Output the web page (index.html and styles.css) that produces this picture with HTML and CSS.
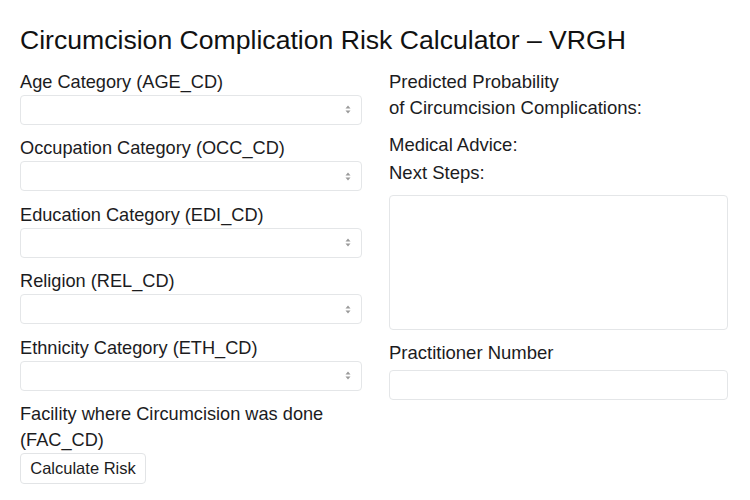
FILE: index.html
```html
<!DOCTYPE html>
<html lang="en">
<head>
<meta charset="utf-8">
<title>Circumcision Complication Risk Calculator – VRGH</title>
<link rel="stylesheet" href="styles.css">
</head>
<body>
<div class="page">
  <h1 class="title">Circumcision Complication Risk Calculator – VRGH</h1>
  <div class="columns">
    <form class="col col-left">
      <div class="field">
        <label class="label" for="age">Age Category (AGE_CD)</label>
        <div class="select-wrap">
          <select id="age" class="select"></select>
          <svg class="arrows" width="6" height="9" viewBox="0 0 6 9"><path d="M3 0.5 L5.5 3.5 H0.5 Z M3 8.5 L5.5 5.5 H0.5 Z" fill="#9a9a9a"/></svg>
        </div>
      </div>
      <div class="field">
        <label class="label" for="occ">Occupation Category (OCC_CD)</label>
        <div class="select-wrap">
          <select id="occ" class="select"></select>
          <svg class="arrows" width="6" height="9" viewBox="0 0 6 9"><path d="M3 0.5 L5.5 3.5 H0.5 Z M3 8.5 L5.5 5.5 H0.5 Z" fill="#9a9a9a"/></svg>
        </div>
      </div>
      <div class="field">
        <label class="label" for="edi">Education Category (EDI_CD)</label>
        <div class="select-wrap">
          <select id="edi" class="select"></select>
          <svg class="arrows" width="6" height="9" viewBox="0 0 6 9"><path d="M3 0.5 L5.5 3.5 H0.5 Z M3 8.5 L5.5 5.5 H0.5 Z" fill="#9a9a9a"/></svg>
        </div>
      </div>
      <div class="field">
        <label class="label" for="rel">Religion (REL_CD)</label>
        <div class="select-wrap">
          <select id="rel" class="select"></select>
          <svg class="arrows" width="6" height="9" viewBox="0 0 6 9"><path d="M3 0.5 L5.5 3.5 H0.5 Z M3 8.5 L5.5 5.5 H0.5 Z" fill="#9a9a9a"/></svg>
        </div>
      </div>
      <div class="field">
        <label class="label" for="eth">Ethnicity Category (ETH_CD)</label>
        <div class="select-wrap">
          <select id="eth" class="select"></select>
          <svg class="arrows" width="6" height="9" viewBox="0 0 6 9"><path d="M3 0.5 L5.5 3.5 H0.5 Z M3 8.5 L5.5 5.5 H0.5 Z" fill="#9a9a9a"/></svg>
        </div>
      </div>
      <div class="field field-last">
        <label class="label" for="fac">Facility where Circumcision was done (FAC_CD)</label>
      </div>
      <button type="button" class="btn">Calculate Risk</button>
    </form>
    <div class="col col-right">
      <p class="out-head">Predicted Probability<br>of Circumcision Complications:</p>
      <p class="out-line out-advice">Medical Advice:</p>
      <p class="out-line out-steps">Next Steps:</p>
      <textarea class="textarea"></textarea>
      <label class="label label-prac" for="prac">Practitioner Number</label>
      <input id="prac" class="input" type="text">
    </div>
  </div>
</div>
</body>
</html>
```

FILE: styles.css
```css
html, body {
  margin: 0;
  padding: 0;
  background: #ffffff;
}

body {
  font-family: "Liberation Sans", Arial, sans-serif;
  color: #1c1c1e;
}

.page {
  padding: 24px 22px 0 20px;
}

.title {
  margin: 0 0 12px 0;
  font-size: 26.6px;
  font-weight: 400;
  line-height: 32.5px;
  color: #111111;
}

.columns {
  display: grid;
  grid-template-columns: 342px 339px;
  column-gap: 27px;
  align-items: start;
}

.col {
  display: flex;
  flex-direction: column;
  margin: 0;
}

.label {
  display: block;
  font-size: 18.5px;
  line-height: 26px;
  color: #1c1c1e;
}

.col-left .label {
  font-size: 18.2px;
}

.field {
  margin-bottom: 10.5px;
}

.field-last {
  margin-bottom: 0;
}

.select-wrap {
  position: relative;
  height: 30px;
}

.select {
  appearance: none;
  -webkit-appearance: none;
  display: block;
  box-sizing: border-box;
  width: 100%;
  height: 30px;
  margin: 0;
  border: 1px solid #e4e6e8;
  border-radius: 4px;
  background: #ffffff;
  font-family: inherit;
  font-size: 16px;
}

.arrows {
  position: absolute;
  right: 11px;
  top: 10.5px;
  pointer-events: none;
}

.btn {
  align-self: flex-start;
  box-sizing: border-box;
  width: 126px;
  height: 31px;
  margin: 0;
  padding: 0;
  white-space: nowrap;
  text-align: center;
  background: #ffffff;
  border: 1px solid #e2e4e6;
  border-radius: 4px;
  font-family: inherit;
  font-size: 16.5px;
  color: #1c1c1e;
}

.out-head,
.out-line {
  margin: 0;
  font-size: 18.5px;
  line-height: 26px;
  color: #1c1c1e;
}

.out-advice {
  margin-top: 11px;
}

.out-steps {
  margin-top: 2px;
}

.textarea {
  display: block;
  box-sizing: border-box;
  width: 100%;
  height: 135px;
  margin: 9px 0 0 0;
  border: 1px solid #e4e6e8;
  border-radius: 4px;
  resize: none;
  background: #ffffff;
}

.label-prac {
  margin-top: 10.5px;
}

.input {
  display: block;
  box-sizing: border-box;
  width: 100%;
  height: 30.5px;
  margin: 3.5px 0 0 0;
  border: 1px solid #e4e6e8;
  border-radius: 4px;
  background: #ffffff;
  font-family: inherit;
  font-size: 16px;
}
```
